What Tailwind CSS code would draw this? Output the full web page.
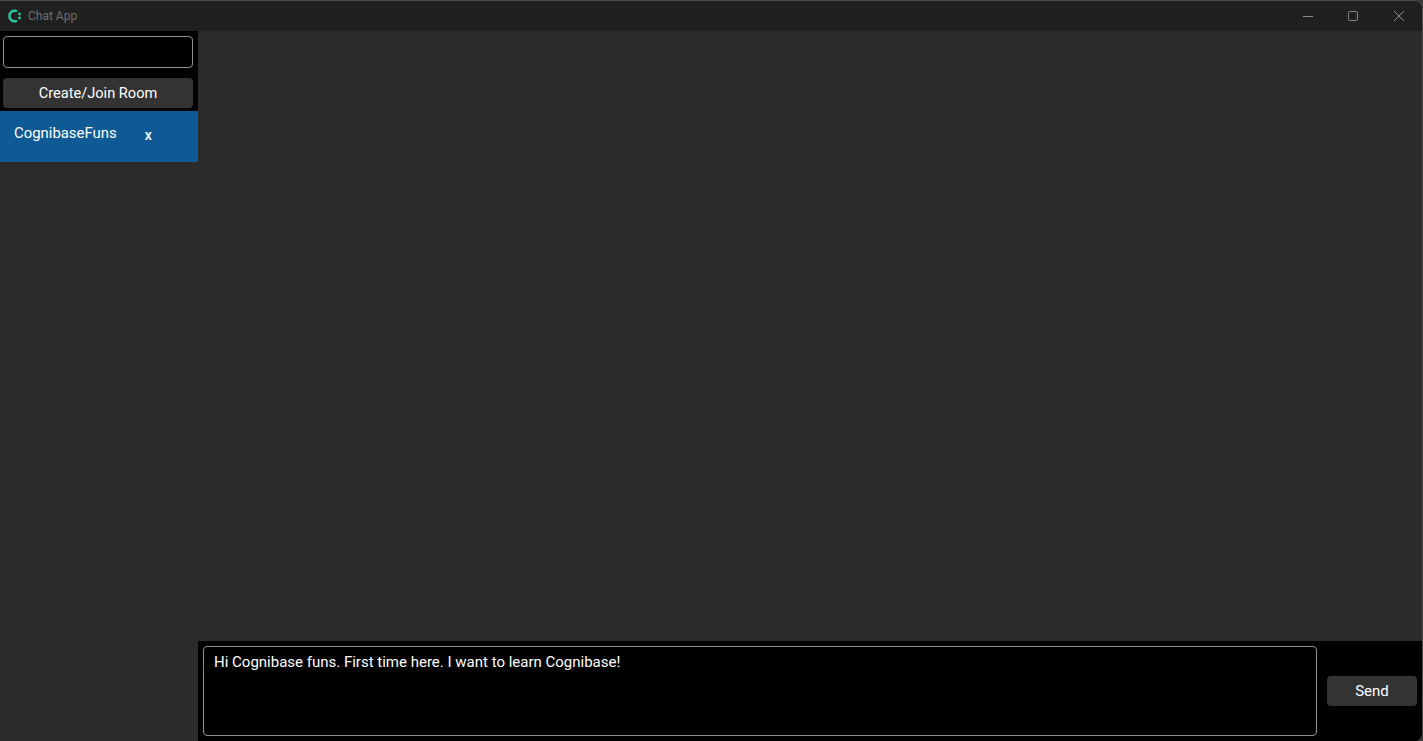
<!DOCTYPE html>
<html lang="en">
<head>
    <meta charset="UTF-8">
    <title>Chat App</title>
    <script src="https://cdn.jsdelivr.net/npm/@tailwindcss/browser@4"></script>
</head>
<body class="h-screen overflow-hidden bg-[#3a3a3a] font-['Roboto',sans-serif] text-white">
    <div class="h-full overflow-hidden rounded-tr-[8px] rounded-br-[8px] border-t border-r border-[#4d4d4d] bg-[#2b2b2b]">
        <div class="flex h-[30px] items-center justify-between bg-[#202020]">
            <div class="flex items-center">
                <svg class="ml-[7px] h-[14px] w-[15px]" viewBox="0 0 15 14">
                    <path d="M9 2 A5.2 5.2 0 1 0 9 12" fill="none" stroke="#2dc5a0" stroke-width="2.5" stroke-linecap="round"/>
                    <circle cx="12.5" cy="5" r="1.4" fill="#2dc5a0"/>
                    <circle cx="12.5" cy="9" r="1.4" fill="#2dc5a0"/>
                </svg>
                <span class="ml-[6px] text-[12px] text-[#6f6f6f]">Chat App</span>
            </div>
            <div class="flex items-center">
                <div class="flex w-[44px] justify-center">
                    <svg class="h-[10px] w-[10px]" viewBox="0 0 10 10"><path d="M0 5.5H10" stroke="#8a8a8a" stroke-width="1"/></svg>
                </div>
                <div class="flex w-[46px] justify-center">
                    <svg class="h-[10px] w-[10px]" viewBox="0 0 10 10"><rect x="0.5" y="0.5" width="9" height="9" rx="1" fill="none" stroke="#8a8a8a"/></svg>
                </div>
                <div class="flex w-[46px] justify-center">
                    <svg class="h-[10px] w-[10px]" viewBox="0 0 10 10"><path d="M0 0L10 10M10 0L0 10" stroke="#8a8a8a"/></svg>
                </div>
            </div>
        </div>

        <div class="flex h-[710px]">
            <aside class="flex w-[198px] flex-col">
                <div class="flex h-[80px] flex-col bg-black px-[3px] pt-[5px]">
                    <input type="text" class="h-[32px] w-[190px] rounded-[4px] border border-[#8f8f8f] bg-black">
                    <button class="mt-[10px] h-[30px] w-[190px] rounded-[4px] bg-[#333333] pt-[1px] text-[14.6px] text-white">Create/Join Room</button>
                </div>
                <div class="flex h-[51px] bg-[#0f5a94] pl-[14px]">
                    <span class="mt-[13px] text-[14.9px] leading-[18px]">CognibaseFuns</span>
                    <span class="mt-[16px] ml-[28px] text-[14px] leading-[16px] font-medium">x</span>
                </div>
            </aside>
            <main class="flex flex-1 flex-col">
                <div class="flex-1"></div>
                <div class="flex h-[100px] items-center bg-black pr-[5px] pl-[5px]">
                    <textarea class="h-[90px] w-[1114px] resize-none rounded-[4px] border border-[#8f8f8f] bg-black px-[10px] pt-[6px] text-[15px] leading-[18px] text-white outline-none">Hi Cognibase funs. First time here. I want to learn Cognibase!</textarea>
                    <button class="ml-[10px] h-[30px] w-[90px] rounded-[4px] bg-[#333333] text-[15px] text-white">Send</button>
                </div>
            </main>
        </div>
    </div>
</body>
</html>
